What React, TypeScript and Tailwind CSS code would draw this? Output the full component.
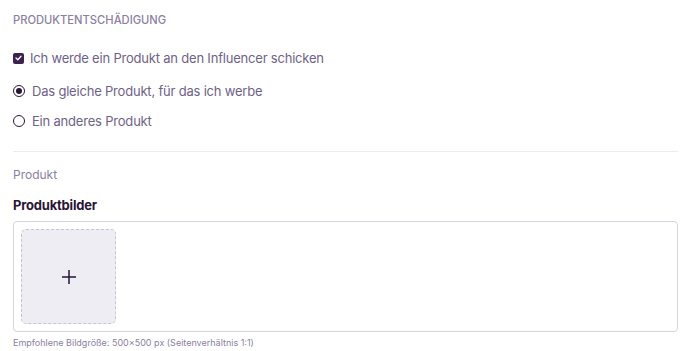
export default function App() {
  return (
    <div className="min-h-[351px] w-[688px] bg-white pl-[13px] pr-[10px] pt-[13px] font-['Inter',sans-serif]">
      {/* Produktentschädigung */}
      <div className="text-[11.2px] font-medium uppercase leading-[14px] text-[#8b80a3]">Produktentschädigung</div>

      <label className="mt-[23px] flex items-center gap-[6px] text-[13px] leading-[16px] tracking-[-0.2px] text-[#6e6287]">
        <span className="flex h-[11px] w-[11px] items-center justify-center rounded-[2px] bg-[#3a2150]">
          <svg width="7" height="6" viewBox="0 0 7 6" fill="none">
            <path d="M1 3l1.8 1.8L6 1.2" stroke="white" strokeWidth="1.3" strokeLinecap="round" strokeLinejoin="round" />
          </svg>
        </span>
        Ich werde ein Produkt an den Influencer schicken
      </label>

      <div className="mt-[17px] flex flex-col gap-[14px]">
        <label className="flex items-center gap-[7px] text-[13px] leading-[16px] tracking-[-0.2px] text-[#6e6287]">
          <span className="flex h-[12px] w-[12px] items-center justify-center rounded-full border-[1.5px] border-[#2a1538]">
            <span className="h-[6px] w-[6px] rounded-full bg-[#2a1538]" />
          </span>
          Das gleiche Produkt, für das ich werbe
        </label>
        <label className="flex items-center gap-[7px] text-[13px] leading-[16px] tracking-[-0.2px] text-[#6e6287]">
          <span className="h-[12px] w-[12px] rounded-full border-[1.5px] border-[#2a1538]" />
          Ein anderes Produkt
        </label>
      </div>

      <div className="mt-[22px] border-t border-[#ecebef]" />

      {/* Produkt */}
      <div className="mt-[15px] text-[12px] leading-[15px] text-[#8b80a3]">Produkt</div>
      <div className="mt-[15px] text-[13px] font-bold leading-[16px] tracking-[-0.2px] text-[#2a1538]">Produktbilder</div>

      <div className="mt-[8px] h-[111px] rounded-[4px] border border-[#d6d3de] p-[7px]">
        <button className="flex h-[95px] w-[95px] items-center justify-center rounded-[5px] border border-dashed border-[#c9c5d3] bg-[#eeedf3]">
          <svg width="14" height="14" viewBox="0 0 14 14">
            <path d="M7 0v14M0 7h14" stroke="#2a1538" strokeWidth="1.5" />
          </svg>
        </button>
      </div>
      <div className="mt-[5px] text-[9px] leading-[11px] text-[#8b80a3]">
        Empfohlene Bildgröße: 500×500 px (Seitenverhältnis 1:1)
      </div>
    </div>
  )
}
